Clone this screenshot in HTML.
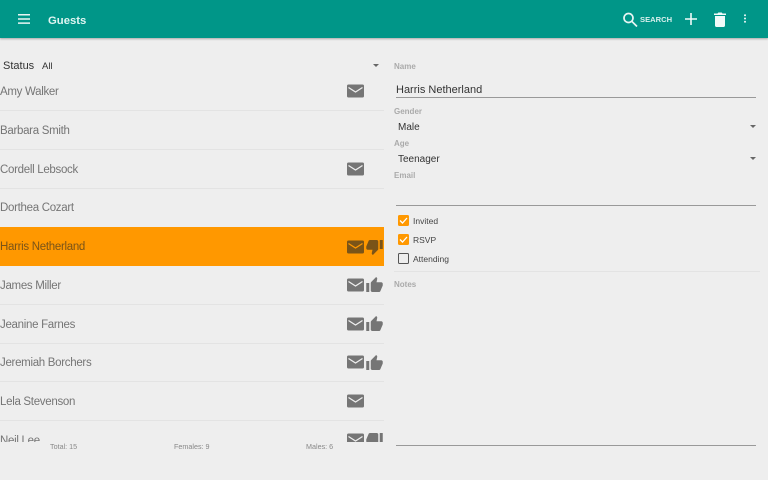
<!DOCTYPE html>
<html><head><meta charset="utf-8"><style>
html,body{margin:0;padding:0}
body{width:768px;height:480px;background:#eee;overflow:hidden;position:relative;font-family:"Liberation Sans",sans-serif}
.a{position:absolute;white-space:nowrap;line-height:14px}
.n{left:0;font-size:11.5px;letter-spacing:-.3px;color:#757575}
.sep{position:absolute;left:0;width:384px;height:1px;background:#e3e3e3}
.l{left:394px;font-size:8px;color:#aaa;font-weight:bold}
.v{font-size:10px;color:#333}
.c{left:413px;font-size:8.5px;color:#444}
svg{position:absolute;display:block}
.tri{position:absolute;width:0;height:0;border:3px solid transparent;border-top:3.5px solid #666;border-bottom:0}
.line{position:absolute;left:396px;width:360px;height:1px;background:#999}
.cb{position:absolute;left:398px;width:11px;height:11px;border-radius:1.5px;background:#ff9800}
.ft{font-size:7.2px;color:#888;top:440px}
</style></head><body>
<svg width="0" height="0"><defs>
<symbol id="m" viewBox="0 0 17 14"><rect x="0" y="0.500" width="17" height="13" rx="1.500" fill="#757575"/><path d="M1.500 3.500L8.500 8L15.500 3.500" fill="none" stroke="#eee" stroke-width="1.300"/></symbol>
<symbol id="s" viewBox="0 0 17 14"><rect x="0" y="0.500" width="17" height="13" rx="1.500" fill="#7a5418"/><path d="M1.500 3.500L8.500 8L15.500 3.500" fill="none" stroke="#ff9800" stroke-width="1.300"/></symbol>
<symbol id="u" viewBox="1 1 22 20"><path d="M1 21h4V9H1v12zm22-11c0-1.100-.9-2-2-2h-6.310l.95-4.570.03-.32c0-.41-.17-.79-.44-1.060L14.170 1 7.590 7.590C7.220 7.950 7 8.450 7 9v10c0 1.100.9 2 2 2h9c.83 0 1.540-.5 1.840-1.220l3.020-7.050c.09-.23.140-.47.140-.73v-2z"/></symbol>
<symbol id="d" viewBox="1 3 22 20"><path d="M15 3H6c-.83 0-1.540.5-1.840 1.220l-3.020 7.050c-.09.23-.14.47-.14.73v2c0 1.100.9 2 2 2h6.310l-.95 4.570-.03.32c0 .41.17.79.44 1.060L9.830 23l6.590-6.590c.36-.36.58-.86.58-1.410V5c0-1.100-.9-2-2-2zm4 0v12h4V3h-4z"/></symbol>
</defs></svg>

<div class="a n" style="top:85px">Amy Walker</div>
<div class="a n" style="top:124px">Barbara Smith</div>
<div class="a n" style="top:162.500px">Cordell Lebsock</div>
<div class="a n" style="top:201px">Dorthea Cozart</div>
<div style="position:absolute;left:0;top:227px;width:384px;height:38.500px;background:#ff9800"></div>
<div class="a n" style="top:240px;color:#7a5418">Harris Netherland</div>
<div class="a n" style="top:278.500px">James Miller</div>
<div class="a n" style="top:317.500px">Jeanine Farnes</div>
<div class="a n" style="top:356px">Jeremiah Borchers</div>
<div class="a n" style="top:395px">Lela Stevenson</div>
<div class="a n" style="top:433.500px">Neil Lee</div>

<div class="sep" style="top:110px"></div><div class="sep" style="top:149px"></div><div class="sep" style="top:188px"></div><div class="sep" style="top:304px"></div><div class="sep" style="top:343px"></div><div class="sep" style="top:381px"></div><div class="sep" style="top:420px"></div>

<svg style="left:347px;top:84px" width="17" height="14"><use href="#m"/></svg>
<svg style="left:347px;top:162px" width="17" height="14"><use href="#m"/></svg>
<svg style="left:347px;top:239.500px" width="17" height="14"><use href="#s"/></svg>
<svg style="left:366px;top:239.500px" width="17" height="15" fill="#7a5418"><use href="#d"/></svg>
<svg style="left:347px;top:278px" width="17" height="14"><use href="#m"/></svg>
<svg style="left:366px;top:277px" width="17" height="15" fill="#757575"><use href="#u"/></svg>
<svg style="left:347px;top:316.500px" width="17" height="14"><use href="#m"/></svg>
<svg style="left:366px;top:315.500px" width="17" height="15" fill="#757575"><use href="#u"/></svg>
<svg style="left:347px;top:355px" width="17" height="14"><use href="#m"/></svg>
<svg style="left:366px;top:354.500px" width="17" height="15" fill="#757575"><use href="#u"/></svg>
<svg style="left:347px;top:394px" width="17" height="14"><use href="#m"/></svg>
<svg style="left:347px;top:433px" width="17" height="14"><use href="#m"/></svg>
<svg style="left:366px;top:433px" width="17" height="15" fill="#757575"><use href="#d"/></svg>

<div style="position:absolute;left:0;top:442px;width:384px;height:38px;background:#eee"></div>
<div style="position:absolute;left:0;top:54px;width:384px;height:22px;background:#eee"></div>
<div class="a" style="left:3px;top:59px;font-size:11px;color:#333">Status</div>
<div class="a v" style="left:42px;top:59.500px;font-size:9.500px">All</div>
<div class="tri" style="left:372.500px;top:64px"></div>
<div class="a ft" style="left:50px">Total: 15</div>
<div class="a ft" style="left:174px">Females: 9</div>
<div class="a ft" style="left:306px">Males: 6</div>

<div class="a l" style="top:59.500px">Name</div>
<div class="a" style="left:396px;top:82.500px;font-size:11px;color:#333">Harris Netherland</div>
<div class="line" style="top:97px"></div>
<div class="a l" style="top:104.500px">Gender</div>
<div class="a v" style="left:398px;top:121px">Male</div>
<div class="tri" style="left:749.500px;top:125px"></div>
<div class="a l" style="top:136.500px">Age</div>
<div class="a v" style="left:398px;top:153px">Teenager</div>
<div class="tri" style="left:749.500px;top:157px"></div>
<div class="a l" style="top:168.500px">Email</div>
<div class="line" style="top:205px"></div>

<div class="cb" style="top:215px"></div>
<svg style="left:398px;top:215px" width="11" height="11" fill="none" stroke="#fff" stroke-width="1.300"><path d="M2 5.500L4.500 8L9 3"/></svg>
<div class="a c" style="top:213.500px">Invited</div>
<div class="cb" style="top:234px"></div>
<svg style="left:398px;top:234px" width="11" height="11" fill="none" stroke="#fff" stroke-width="1.300"><path d="M2 5.500L4.500 8L9 3"/></svg>
<div class="a c" style="top:232.500px">RSVP</div>
<div style="position:absolute;left:398px;top:253px;width:9px;height:9px;border:1px solid #555;border-radius:1.500px"></div>
<div class="a c" style="top:251.500px">Attending</div>
<div style="position:absolute;left:394px;top:271px;width:366px;height:1px;background:#e3e3e3"></div>
<div class="a l" style="top:277.500px">Notes</div>
<div class="line" style="top:445px"></div>

<div style="position:absolute;left:0;top:0;width:768px;height:38px;background:#009688;box-shadow:0 1px 2px rgba(0,0,0,.3)"></div>
<svg style="left:18px;top:14px" width="12" height="10" fill="#e8f5f3"><path d="M0 0h12v1.500H0zM0 4.200h12v1.500H0zM0 8.400h12v1.500H0z"/></svg>
<div class="a" style="left:48px;top:13.500px;font-size:11.300px;font-weight:bold;color:#e0f5f2">Guests</div>
<svg style="left:622px;top:12px" width="16" height="15" fill="none" stroke="#e8f5f3" stroke-width="1.700"><circle cx="6.500" cy="6" r="4.500"/><path d="M9.800 9.300L15 14.500"/></svg>
<div class="a" style="left:640px;top:13px;font-size:7.600px;font-weight:bold;color:#d8f0ed">SEARCH</div>
<svg style="left:685px;top:13px" width="12" height="12" fill="#f0faf9"><path d="M5.200 0h1.600v5.200H12v1.600H6.800V12H5.200V6.800H0V5.200h5.200z"/></svg>
<svg style="left:714px;top:12px" width="12" height="15" fill="#f0faf9"><path d="M1 4h10v9.500c0 .8-.6 1.500-1.400 1.500H2.400C1.600 15 1 14.300 1 13.500zM0 1.500h3.500L4.300.5h3.400l.8 1H12V3H0z"/></svg>
<svg style="left:743px;top:14px" width="4" height="10" fill="#f0faf9"><circle cx="2" cy="1.200" r="1"/><circle cx="2" cy="4.500" r="1"/><circle cx="2" cy="7.800" r="1"/></svg>
</body></html>
